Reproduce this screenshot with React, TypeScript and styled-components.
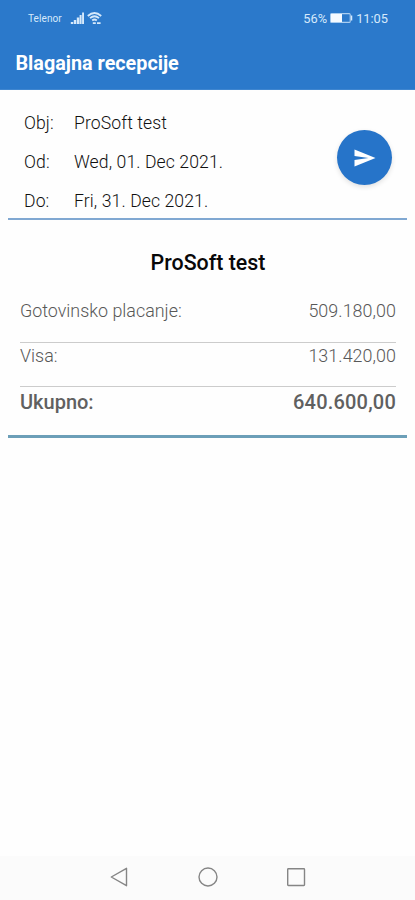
import React from "react";
import styled, { createGlobalStyle } from "styled-components";

const GlobalStyle = createGlobalStyle`
  * { box-sizing: border-box; }
  body { margin: 0; background: #fefefe; font-family: Roboto, sans-serif; }
`;

const Screen = styled.div`
  width: 415px;
  height: 900px;
  display: flex;
  flex-direction: column;
  overflow: hidden;
  background: #fefefe;
`;

const Header = styled.header`
  height: 90px;
  background: #2b79cb;
  border-bottom: 1px solid #3f86d0;
  color: #fff;
`;

const StatusBar = styled.div`
  height: 36px;
  padding: 0 27px 0 28px;
  display: flex;
  align-items: center;
  color: #d6e9fb;
`;

const Carrier = styled.span`
  width: 42px;
  font-size: 10px;
  letter-spacing: 0.1px;
  line-height: 12px;
  padding-top: 1px;
`;

const StatusIcon = styled.svg<{ $gap?: number }>`
  display: block;
  flex: none;
  margin-left: ${(p) => p.$gap ?? 0}px;
`;

const StatusRight = styled.div`
  margin-left: auto;
  display: flex;
  align-items: center;
  font-size: 12.8px;
  line-height: 16px;
`;

const Percent = styled.span`
  padding-top: 1px;
`;

const Clock = styled.span`
  margin-left: 3px;
  padding-top: 1px;
`;

const AppTitle = styled.h1`
  margin: 0;
  padding: 16px 0 0 15.5px;
  font-size: 19.8px;
  line-height: 24px;
  font-weight: 700;
`;

const Filters = styled.section`
  margin: 0 8px;
  height: 130px;
  padding: 14px 15px 0 16px;
  display: flex;
  justify-content: space-between;
  border-bottom: 2px solid #80a8d2;
`;

const FilterList = styled.div`
  display: flex;
  flex-direction: column;
`;

const FilterRow = styled.div`
  display: grid;
  grid-template-columns: 50px auto;
  height: 39px;
  font-size: 17.6px;
  font-weight: 300;
  line-height: 39px;
  letter-spacing: 0.1px;
  color: #101010;
  white-space: nowrap;
`;

const SendButton = styled.button`
  width: 55px;
  height: 55px;
  margin-top: 26px;
  padding: 0;
  border: 0;
  border-radius: 50%;
  display: grid;
  place-items: center;
  background: #2674c9;
  box-shadow: 0 2px 5px rgba(0, 0, 0, 0.12);
`;

const Report = styled.section`
  margin: 0 8px;
  height: 218px;
  padding: 30px 11px 0 12px;
  border-bottom: 3px solid #6c9fb8;
`;

const ReportTitle = styled.h2`
  margin: 0 0 22px;
  text-align: center;
  font-size: 21.4px;
  line-height: 26px;
  font-weight: 500;
  color: #080808;
`;

const PaymentRow = styled.div<{ $height: number }>`
  height: ${(p) => p.$height}px;
  display: flex;
  justify-content: space-between;
  font-size: 17.9px;
  font-weight: 300;
  line-height: 26px;
  color: #585858;
  border-bottom: 1px solid #cccccc;
`;

const TotalRow = styled.div`
  display: flex;
  justify-content: space-between;
  padding-top: 1px;
  font-size: 20px;
  line-height: 28px;
  font-weight: 500;
  color: #606060;
`;

const Amount = styled.span<{ $spacing?: number }>`
  letter-spacing: ${(p) => p.$spacing ?? 0.05}px;
`;

const NavigationBar = styled.nav`
  margin-top: auto;
  height: 44px;
  padding: 0 109px 2px;
  display: flex;
  justify-content: space-between;
  align-items: center;
  background: #fbfbfb;
`;

const NavIcon = styled.svg`
  display: block;
  fill: none;
  stroke: #858585;
  stroke-width: 1.4;
`;

export default function App() {
  return (
    <>
      <GlobalStyle />
      <Screen>
        <Header>
          <StatusBar>
            <Carrier>Telenor</Carrier>
            <StatusIcon width="15" height="13" viewBox="0 0 15 13" fill="#d6e9fb">
              <path d="M.8 10h2.4v2H.8zM3.8 8h2.4v4H3.8zM6.8 5.5h2.4V12H6.8zM9.6 3h2v9h-2zM12.1.5H14V12h-1.9z" />
            </StatusIcon>
            <StatusIcon $gap={2} width="16" height="13" viewBox="0 0 16 13" fill="none" stroke="#d6e9fb" strokeWidth="1.8">
              <path d="M.8 4Q7.5-2 14.2 4M3 6.2Q7.5 2.2 12 6.2M5.2 8.5Q7.5 6.5 9.8 8.5" />
              <path d="M5.8 11.2h3M10 11.2h3.6" />
            </StatusIcon>
            <StatusRight>
              <Percent>56%</Percent>
              <StatusIcon $gap={3} width="23" height="10" viewBox="0 0 23 10">
                <rect x=".6" y=".6" width="19.6" height="8.8" rx="1" fill="none" stroke="#a9cdf0" strokeWidth="1.1" />
                <rect x="1" y="1" width="11" height="8" fill="#f5faff" />
                <path d="M21.5 2.5v5" stroke="#d6e9fb" strokeWidth="1.5" />
              </StatusIcon>
              <Clock>11:05</Clock>
            </StatusRight>
          </StatusBar>
          <AppTitle>Blagajna recepcije</AppTitle>
        </Header>

        <Filters>
          <FilterList>
            <FilterRow><span>Obj:</span><span>ProSoft test</span></FilterRow>
            <FilterRow><span>Od:</span><span>Wed, 01. Dec 2021.</span></FilterRow>
            <FilterRow><span>Do:</span><span>Fri, 31. Dec 2021.</span></FilterRow>
          </FilterList>
          <SendButton aria-label="Send">
            <svg width="24" height="24" viewBox="0 0 24 24" fill="#fff">
              <path d="M1.5 20.5 22.5 12 1.5 3.5v6.6L15.5 12l-14 1.9z" />
            </svg>
          </SendButton>
        </Filters>

        <Report>
          <ReportTitle>ProSoft test</ReportTitle>
          <PaymentRow $height={45}><span>Gotovinsko placanje:</span><Amount>509.180,00</Amount></PaymentRow>
          <PaymentRow $height={44}><span>Visa:</span><Amount>131.420,00</Amount></PaymentRow>
          <TotalRow><span>Ukupno:</span><Amount $spacing={0.2}>640.600,00</Amount></TotalRow>
        </Report>

        <NavigationBar>
          <NavIcon width="20" height="20" viewBox="0 0 20 20">
            <path d="M2.3 10 17.5 1.3v17.4z" strokeLinejoin="round" />
          </NavIcon>
          <NavIcon width="20" height="20" viewBox="0 0 20 20">
            <circle cx="10" cy="10" r="9" />
          </NavIcon>
          <NavIcon width="20" height="20" viewBox="0 0 20 20">
            <rect x="1.7" y="1.7" width="16.8" height="16.8" rx=".7" />
          </NavIcon>
        </NavigationBar>
      </Screen>
    </>
  );
}
